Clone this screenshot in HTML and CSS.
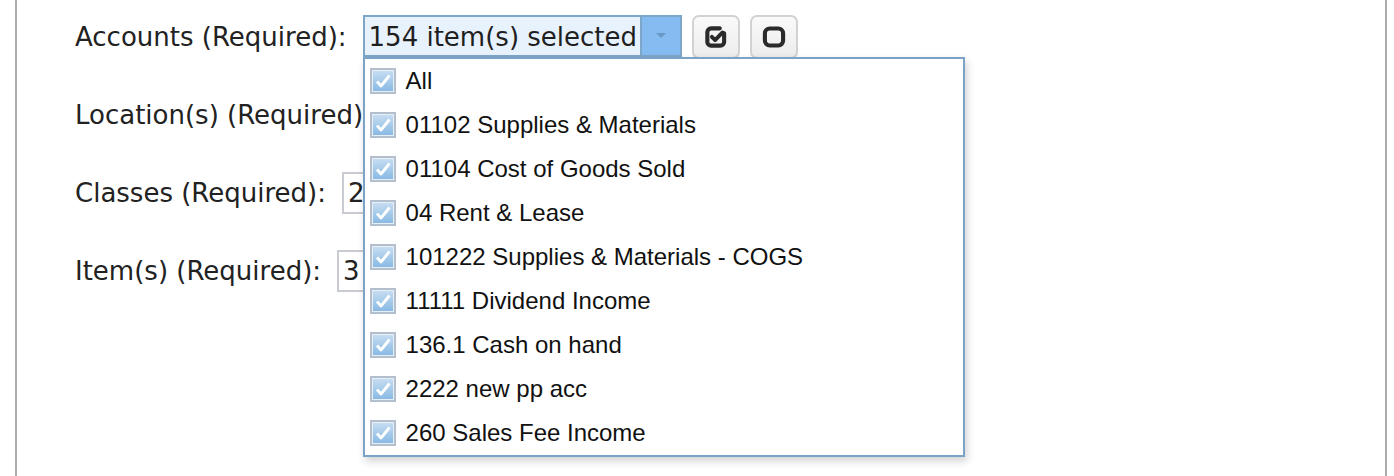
FILE: index.html
```html
<!DOCTYPE html>
<html>
<head>
<meta charset="utf-8">
<link rel="stylesheet" href="styles.css">
</head>
<body>
<div class="panel">
  <div class="form">
    <div class="row">
      <span class="label">Accounts (Required):</span>
      <div class="ms">
        <div class="ms-box">
          <span class="ms-text">154 item(s) selected</span>
          <span class="ms-arrow"><svg width="12" height="6" viewBox="0 0 12 6"><path d="M1 0 L11 0 L6 5 Z" fill="#6b97c4"/></svg></span>
        </div>
        <button class="btn" type="button">
          <svg width="26" height="26" viewBox="0 0 24 24"><path d="M19.5 8.5 V16.5 A3.5 3.5 0 0 1 16 20 H7.5 A3.5 3.5 0 0 1 4 16.5 V7.5 A3.5 3.5 0 0 1 7.5 4 H15.5" fill="none" stroke="#2a2a2a" stroke-width="3.8" stroke-linecap="round"/><path d="M8.2 11.8 L11.2 14.8 L18 7.8" fill="none" stroke="#2a2a2a" stroke-width="3.6" stroke-linejoin="round" stroke-linecap="round"/></svg>
        </button>
        <button class="btn" type="button">
          <svg width="26" height="26" viewBox="0 0 24 24"><rect x="3.6" y="4.2" width="16.8" height="15.6" rx="4.5" fill="none" stroke="#2a2a2a" stroke-width="3.8"/></svg>
        </button>
        <div class="dropdown">
          <div class="opt"><span class="cb"></span><span>All</span></div>
          <div class="opt"><span class="cb"></span><span>01102 Supplies &amp; Materials</span></div>
          <div class="opt"><span class="cb"></span><span>01104 Cost of Goods Sold</span></div>
          <div class="opt"><span class="cb"></span><span>04 Rent &amp; Lease</span></div>
          <div class="opt"><span class="cb"></span><span>101222 Supplies &amp; Materials - COGS</span></div>
          <div class="opt"><span class="cb"></span><span>11111 Dividend Income</span></div>
          <div class="opt"><span class="cb"></span><span>136.1 Cash on hand</span></div>
          <div class="opt"><span class="cb"></span><span>2222 new pp acc</span></div>
          <div class="opt"><span class="cb"></span><span>260 Sales Fee Income</span></div>
        </div>
      </div>
    </div>
    <div class="row">
      <span class="label">Location(s) (Required):</span>
      <div class="field">1</div>
    </div>
    <div class="row">
      <span class="label">Classes (Required):</span>
      <div class="field">2</div>
    </div>
    <div class="row">
      <span class="label">Item(s) (Required):</span>
      <div class="field">3</div>
    </div>
  </div>
</div>
</body>
</html>
```
FILE: styles.css
```css
html, body {
  margin: 0;
  padding: 0;
  background: #fff;
  overflow: hidden;
}
.panel {
  margin: 0 7px 0 15px;
  height: 476px;
  border-left: 2px solid #ababab;
  border-right: 2px solid #ababab;
  box-sizing: border-box;
}
.form {
  padding: 16px 0 0 58px;
  display: flex;
  flex-direction: column;
  gap: 36px;
}
.row {
  display: flex;
  align-items: center;
  height: 42px;
  gap: 16px;
}
.label {
  font-family: "DejaVu Sans", Verdana, sans-serif;
  font-size: 26px;
  color: #222;
  white-space: nowrap;
}
.ms {
  position: relative;
  display: flex;
  align-items: flex-start;
  gap: 10px;
  z-index: 2;
}
.ms-box {
  display: flex;
  width: 319px;
  height: 42px;
  box-sizing: border-box;
  border: 2px solid #7ea6c9;
  background: #e8f2fd;
}
.ms-text {
  flex: 1;
  font-family: "DejaVu Sans", Verdana, sans-serif;
  font-size: 26px;
  line-height: 40px;
  padding-left: 4px;
  color: #1f1f1f;
  white-space: nowrap;
  overflow: hidden;
}
.ms-arrow {
  width: 38px;
  flex: none;
  background: #84bcf1;
  border-left: 2px solid #7ea6c9;
  display: flex;
  align-items: center;
  justify-content: center;
}
.btn {
  width: 48px;
  height: 44px;
  margin: 0;
  padding: 0;
  border: 2px solid #d2d2d2;
  border-radius: 7px;
  background: linear-gradient(#fafafa, #ececec);
  display: flex;
  align-items: center;
  justify-content: center;
}
.dropdown {
  position: absolute;
  top: 42px;
  left: 0;
  width: 602px;
  height: 400px;
  box-sizing: border-box;
  border: 2px solid #7ba3c7;
  background: #fff;
  box-shadow: 2px 4px 8px rgba(0, 0, 0, 0.18);
}
.opt {
  height: 44px;
  display: flex;
  align-items: center;
  gap: 10px;
  padding-left: 5px;
  font-family: "Liberation Sans", Arial, sans-serif;
  font-size: 24px;
  color: #111;
  white-space: nowrap;
}
.cb {
  width: 26px;
  height: 26px;
  flex: none;
  box-sizing: border-box;
  border: 2px solid #b3bfcc;
  background:
    url("data:image/svg+xml;utf8,<svg xmlns='http://www.w3.org/2000/svg' width='22' height='22' viewBox='0 0 22 22'><path d='M5 11.5 L9 16 L17.5 5.5' fill='none' stroke='white' stroke-width='2.8' stroke-linejoin='round'/></svg>") center/22px 22px no-repeat,
    linear-gradient(#c9def2, #86b8e3);
  box-shadow: inset 0 0 0 1px #e6eef6;
}
.field {
  height: 42px;
  min-width: 60px;
  box-sizing: border-box;
  border: 2px solid #c8ccd2;
  padding: 0 4px;
  font-family: "DejaVu Sans", Verdana, sans-serif;
  font-size: 26px;
  line-height: 38px;
  color: #222;
  white-space: nowrap;
}
```
